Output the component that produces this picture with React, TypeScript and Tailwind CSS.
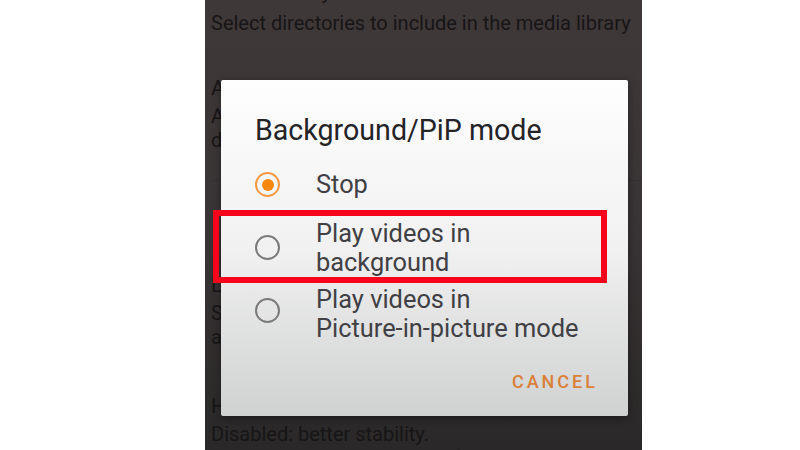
import React from "react";

const font = { fontFamily: "Roboto, 'Noto Sans', sans-serif" };

function Radio({ checked }: { checked?: boolean }) {
  if (checked) {
    return (
      <div className="w-[25px] h-[25px] rounded-full border-[2px] border-[#f79a45] flex items-center justify-center shrink-0">
        <div className="w-[12px] h-[12px] rounded-full bg-[#f7870f]" />
      </div>
    );
  }
  return <div className="w-[25px] h-[25px] rounded-full border-[2px] border-[#7a7a7c] shrink-0" />;
}

export default function App() {
  return (
    <div className="w-[800px] h-[450px] bg-white flex overflow-hidden" style={font}>
      <div className="w-[205px] bg-white" />
      <div className="relative w-[437px] h-[450px] bg-gradient-to-b from-[#3f3839] via-[#393435] to-[#2a2828] overflow-hidden">
        <div className="pl-[6px] text-[#171516] flex flex-col">
          <div className="text-[21px] leading-[24px] mt-[-20px] whitespace-nowrap">Media library folders</div>
          <div className="text-[20px] leading-[24px] mt-[7px] whitespace-nowrap">Select directories to include in the media library</div>
          <div className="text-[21px] leading-[24px] mt-[41px] whitespace-nowrap">Auto rescan</div>
          <div className="text-[20px] leading-[24px] mt-[4px] whitespace-nowrap">Always rescan the media library at startup and</div>
          <div className="text-[20px] leading-[24px] whitespace-nowrap">detect new media files</div>
          <div className="h-[1px] bg-[#353031] mt-[28px]" />
          <div className="text-[21px] leading-[24px] mt-[92px] whitespace-nowrap">Lock screen orientation</div>
          <div className="text-[20px] leading-[24px] mt-[4px] whitespace-nowrap">Set the screen orientation of the video player</div>
          <div className="text-[20px] leading-[24px] whitespace-nowrap">automatically</div>
          <div className="text-[21px] leading-[24px] mt-[45px] whitespace-nowrap">Hardware acceleration</div>
          <div className="text-[20px] leading-[24px] mt-[4px] whitespace-nowrap">Disabled: better stability.</div>
          <div className="text-[20px] leading-[24px] whitespace-nowrap">Decoding: may improve performance.</div>
        </div>

        <div className="absolute left-[16px] top-[80px] w-[407px] h-[336px] rounded-[2px] bg-gradient-to-b from-[#fefefe] via-[#f1f1f1] to-[#d0d1d1] shadow-[0_2px_8px_rgba(0,0,0,0.4)] pl-[34px] pr-[30px] pt-[34px] flex flex-col">
          <div className="text-[28.6px] leading-[32px] text-[#232328] whitespace-nowrap">Background/PiP mode</div>
          <div className="flex items-center mt-[24px] h-[29px]">
            <Radio checked />
            <div className="ml-[36px] text-[25.4px] leading-[29px] text-[#404044]">Stop</div>
          </div>
          <div className="flex items-start mt-[20px]">
            <div className="mt-[16px]"><Radio /></div>
            <div className="ml-[36px] text-[25.4px] leading-[29px] text-[#404044]">
              <div>Play videos in</div>
              <div>background</div>
            </div>
          </div>
          <div className="flex items-start mt-[8px]">
            <div className="mt-[13px]"><Radio /></div>
            <div className="ml-[36px] text-[25.4px] leading-[29px] text-[#404044]">
              <div>Play videos in</div>
              <div className="whitespace-nowrap">Picture-in-picture mode</div>
            </div>
          </div>
          <div className="flex justify-end mt-[29px]">
            <div className="text-[18px] leading-[20px] font-medium tracking-[3px] text-[#d9803a]">CANCEL</div>
          </div>
        </div>

        <div className="absolute left-[8px] top-[210px] w-[394px] h-[73px] border-[6px] border-[#f7041c]" />
      </div>
      <div className="flex-1 bg-white" />
    </div>
  );
}
